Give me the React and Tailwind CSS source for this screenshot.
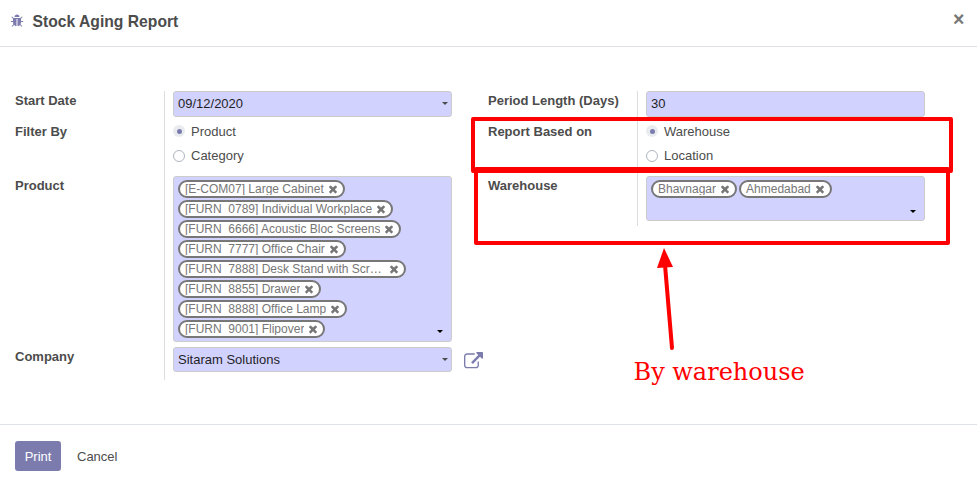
const ICONS = {
  times:
    'M1490 1322q0 40-28 68l-136 136q-28 28-68 28t-68-28l-294-294-294 294q-28 28-68 28t-68-28l-136-136q-28-28-28-68t28-68l294-294-294-294q-28-28-28-68t28-68l136-136q28-28 68-28t68 28l294 294 294-294q28-28 68-28t68 28l136 136q28 28 28 68t-28 68l-294 294 294 294q28 28 28 68z',
  bug: 'M1696 960q0 26-19 45t-45 19h-224q0 171-67 290l208 209q19 19 19 45t-19 45q-18 19-45 19t-45-19l-198-197q-5 5-15 13t-42 28.5-65 36.5-82 29-97 13v-896h-128v896q-51 0-101.5-13.5t-87-33-66-39-43.5-32.5l-15-14-183 207q-20 21-48 21-24 0-43-16-19-18-20.5-44.5t15.5-46.5l202-227q-58-114-58-274h-224q-26 0-45-19t-19-45 19-45 45-19h224v-294l-173-173q-19-19-19-45t19-45 45-19 45 19l173 173h844l173-173q19-19 45-19t45 19 19 45-19 45l-173 173v294h224q26 0 45 19t19 45zm-480-576h-640q0-133 93.5-226.5t226.5-93.5 226.5 93.5 93.5 226.5z',
  external:
    'M1408 928v320q0 119-84.5 203.5t-203.5 84.5h-832q-119 0-203.5-84.5t-84.5-203.5v-832q0-119 84.5-203.5t203.5-84.5h704q14 0 23 9t9 23v64q0 14-9 23t-23 9h-704q-66 0-113 47t-47 113v832q0 66 47 113t113 47h832q66 0 113-47t47-113v-320q0-14 9-23t23-9h64q14 0 23 9t9 23zm384-864v512q0 26-19 45t-45 19-45-19l-176-176-652 652q-10 10-23 10t-23-10l-114-114q-10-10-10-23t10-23l652-652-176-176q-19-19-19-45t19-45 45-19h512q26 0 45 19t19 45z',
};

const PRODUCTS = [
  '[E-COM07] Large Cabinet',
  '[FURN_0789] Individual Workplace',
  '[FURN_6666] Acoustic Bloc Screens',
  '[FURN_7777] Office Chair',
  '[FURN_7888] Desk Stand with Scr…',
  '[FURN_8855] Drawer',
  '[FURN_8888] Office Lamp',
  '[FURN_9001] Flipover',
];

function Icon({ name, className }) {
  return (
    <svg viewBox="0 0 1792 1792" fill="currentColor" className={className}>
      <path d={ICONS[name]} />
    </svg>
  );
}

function Caret({ className }) {
  return (
    <span
      className={`block h-0 w-0 border-x-[3px] border-t-[3px] border-x-transparent ${className}`}
    />
  );
}

function Tag({ children }) {
  const shortened = children.endsWith('…');
  return (
    <span className="mr-0.5 mb-0.5 flex h-[18px] items-start rounded-full border-2 border-[#777777] bg-white pt-px pr-1 pl-[5px] text-xs leading-3 text-[#777777]">
      <span className={`overflow-hidden whitespace-nowrap ${shortened ? 'w-[200px]' : ''}`}>
        {children}
      </span>
      <Icon name="times" className="ml-[3px] h-3 w-3 shrink-0" />
    </span>
  );
}

function Row({ label, height, children }) {
  return (
    <div className={`flex ${height}`}>
      <div className="w-[149px] font-bold whitespace-nowrap">{label}</div>
      <div className="flex grow border-l border-[#dddddd] pl-2">{children}</div>
    </div>
  );
}

function Input({ value, caret, height = 'h-[26px]' }) {
  return (
    <div
      className={`flex w-[279px] items-center justify-between rounded-[3px] border border-[#cccccc] bg-[#d2d2ff] pr-[3px] pl-1 text-[#1f1f26] ${height}`}
    >
      <span>{value}</span>
      {caret && <Caret className="mb-px border-t-[#4c4c4c]" />}
    </div>
  );
}

function Radios({ options }) {
  return (
    <div className="flex flex-col gap-1">
      {options.map((option, i) => (
        <div key={option} className="flex h-5 items-center gap-1.5">
          {i === 0 ? (
            <span className="mb-0.5 flex h-3 w-3 items-center justify-center rounded-full bg-[#e9ecef]">
              <span className="h-[5px] w-[5px] rounded-full bg-[#7c7bad]" />
            </span>
          ) : (
            <span className="h-3 w-3 rounded-full border border-[#adb5bd] bg-white" />
          )}
          <span>{option}</span>
        </div>
      ))}
    </div>
  );
}

function TagField({ tags, height, caretClass }) {
  return (
    <div
      className={`flex w-[279px] items-end justify-between rounded-[3px] border border-[#cccccc] bg-[#d2d2ff] pr-2 pl-1 ${height}`}
    >
      <div className="flex h-full flex-wrap content-start items-start pt-[3px]">
        {tags.map((tag) => (
          <Tag key={tag}>{tag}</Tag>
        ))}
      </div>
      <Caret className={`border-t-black ${caretClass}`} />
    </div>
  );
}

export default function App() {
  return (
    <div className="relative flex h-[493px] w-[977px] flex-col overflow-hidden bg-white font-['Liberation_Sans',Arial,sans-serif] text-[13px] leading-[19.5px] text-[#4c4c4c]">
      <header className="flex h-[47px] items-start justify-between border-b border-[#dee2e6] pr-[12.5px] pl-2.5">
        <div className="flex items-center pt-2.5">
          <Icon name="bug" className="mb-0.5 h-3.5 w-3.5 text-[#7c7bad]" />
          <h1 className="ml-[8.5px] text-[15.7px] leading-6 font-bold">Stock Aging Report</h1>
        </div>
        <button className="mt-[9px] text-[19.5px] leading-5 font-bold text-[#777777]">×</button>
      </header>

      <main className="flex h-[377px] items-start pt-11 pl-[15px]">
        <section className="w-[473px]">
          <Row label="Start Date" height="h-[31px]">
            <Input value="09/12/2020" caret />
          </Row>
          <Row label="Filter By" height="h-[54px]">
            <Radios options={['Product', 'Category']} />
          </Row>
          <Row label="Product" height="h-[171px]">
            <TagField tags={PRODUCTS} height="h-[166px]" caretClass="mb-2" />
          </Row>
          <Row label="Company" height="h-[33px]">
            <Input value="Sitaram Solutions" caret height="h-[25px]" />
            <Icon name="external" className="mt-[5px] ml-3 h-[19px] w-[19px] text-[#7c7bad]" />
          </Row>
        </section>
        <section className="w-[437px]">
          <Row label="Period Length (Days)" height="h-[31px]">
            <Input value="30" />
          </Row>
          <Row label="Report Based on" height="h-[54px]">
            <Radios options={['Warehouse', 'Location']} />
          </Row>
          <Row label="Warehouse" height="h-[50px]">
            <TagField tags={['Bhavnagar', 'Ahmedabad']} height="h-[45px]" caretClass="mb-[7px]" />
          </Row>
        </section>
      </main>

      <footer className="flex grow items-start border-t border-[#dee2e6] pt-4 pl-[15px]">
        <button className="h-[30px] w-[46px] rounded-[3px] bg-[#7c7bad] pt-0.5 text-white">Print</button>
        <button className="ml-4 h-[30px] pt-0.5">Cancel</button>
      </footer>

      {/* Annotations drawn over the form */}
      <div className="absolute top-[117px] left-[471px] h-14 w-[482px] rounded-xs border-4 border-[#ff0000]" />
      <div className="absolute top-[167px] left-[474px] h-[78px] w-[476px] rounded-xs border-4 border-[#ff0000]" />
      <svg className="absolute top-[245px] left-[650px]" width="30" height="108" viewBox="0 0 30 108">
        <path d="M15 20L22 103" stroke="#ff0000" strokeWidth="4" strokeLinecap="round" />
        <path d="M14 3L23 22L7 23Z" fill="#ff0000" />
      </svg>
      <div className="absolute top-[355px] left-[633.5px] font-['DejaVu_Serif',serif] text-2xl leading-[34px] whitespace-nowrap text-[#ff0000]">
        By warehouse
      </div>
    </div>
  );
}
